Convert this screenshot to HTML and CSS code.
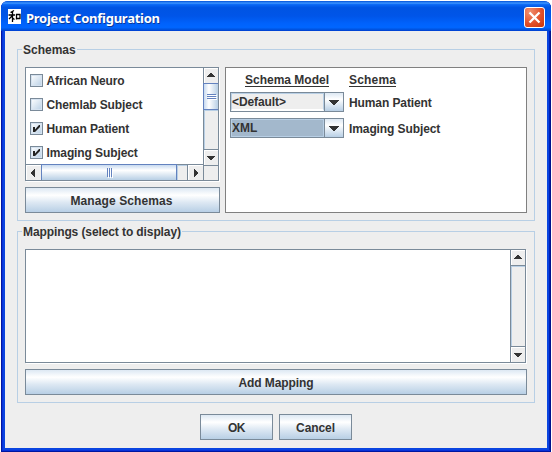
FILE: index.html
```html
<!DOCTYPE html>
<html lang="en">
<head>
<meta charset="utf-8">
<title>Project Configuration</title>
<link rel="stylesheet" href="styles.css">
</head>
<body>
<div class="window">
  <header class="titlebar">
    <svg class="app-icon" width="13" height="15" viewBox="0 0 13 15"><rect width="13" height="15" fill="#fff"/><path d="M6 1.500L2.500 3.500M0.500 6h6.500M4.500 2.500v10.500M4.500 6.500L1 10M4.500 9l2 1.500M8.500 5v5.500M8 5.500h4v4H8.500" fill="none" stroke="#000" stroke-width="1.300"/></svg>
    <h1>Project Configuration</h1>
    <button class="close" aria-label="Close"><svg width="21" height="21" viewBox="0 0 21 21"><path d="M5.500 5.500l10 10M15.500 5.500l-10 10" stroke="#fff" stroke-width="2.300" fill="none"/></svg></button>
  </header>
  <main class="client">
    <section class="group schemas">
      <h2><span>Schemas</span></h2>
      <div class="columns">
        <div class="left">
          <div class="list-pane">
            <ul class="list">
              <li><i class="check"></i><span class="tight">African Neuro</span></li>
              <li><i class="check"></i><span class="tight">Chemlab Subject</span></li>
              <li><i class="check"><svg width="13" height="13" viewBox="0 0 13 13"><path d="M3 5h2v2.500L9 3h1v2L5 10H3z" fill="#222"/></svg></i><span class="tight">Human Patient</span></li>
              <li><i class="check"><svg width="13" height="13" viewBox="0 0 13 13"><path d="M3 5h2v2.500L9 3h1v2L5 10H3z" fill="#222"/></svg></i><span class="tight">Imaging Subject</span></li>
            </ul>
            <div class="vbar">
              <div class="arrow up"><svg width="8" height="4" viewBox="0 0 8 4" shape-rendering="crispEdges"><path d="M3 0h2v1h1v1h1v1h1v1H0V3h1V2h1V1h1z"/></svg></div>
              <div class="vthumb"><i></i><i></i><i></i></div>
              <div class="vtrack"></div>
              <div class="arrow down"><svg width="8" height="4" viewBox="0 0 8 4" shape-rendering="crispEdges"><path d="M3 4h2V3h1V2h1V1h1V0H0v1h1v1h1v1h1z"/></svg></div>
            </div>
            <div class="hbar">
              <div class="harrow left-arrow"><svg width="4" height="8" viewBox="0 0 4 8" shape-rendering="crispEdges"><path d="M0 3h1V2h1V1h1V0h1v8H3V7H2V6H1V5H0z"/></svg></div>
              <div class="hthumb"><i></i><i></i><i></i></div>
              <div class="htrack"></div>
              <div class="harrow right"><svg width="4" height="8" viewBox="0 0 4 8" shape-rendering="crispEdges"><path d="M4 3H3V2H2V1H1V0H0v8h1V7h1V6h1V5h1z"/></svg></div>
            </div>
            <div class="corner"></div>
          </div>
          <button class="btn manage"><span>Manage Schemas</span></button>
        </div>
        <div class="models">
          <div class="head"><span>Schema Model</span></div>
          <div class="head second"><span>Schema</span></div>
          <div class="combo"><span class="value"><b class="tight">&lt;Default&gt;</b></span><span class="drop"><svg width="10" height="5" viewBox="0 0 10 5" shape-rendering="crispEdges"><path d="M0 0h10v1H9v1H8v1H7v1H6v1H4V4H3V3H2V2H1V1H0z"/></svg></span></div>
          <div class="name"><span class="tight">Human Patient</span></div>
          <div class="combo selected"><span class="value"><b>XML</b></span><span class="drop"><svg width="10" height="5" viewBox="0 0 10 5" shape-rendering="crispEdges"><path d="M0 0h10v1H9v1H8v1H7v1H6v1H4V4H3V3H2V2H1V1H0z"/></svg></span></div>
          <div class="name"><span class="tight">Imaging Subject</span></div>
        </div>
      </div>
    </section>
    <section class="group mappings">
      <h2><span class="tight">Mappings (select to display)</span></h2>
      <div class="map-pane">
        <div class="map-view"></div>
        <div class="vbar">
          <div class="arrow up"><svg width="8" height="4" viewBox="0 0 8 4" shape-rendering="crispEdges"><path d="M3 0h2v1h1v1h1v1h1v1H0V3h1V2h1V1h1z"/></svg></div>
          <div class="vtrack"></div>
          <div class="arrow down"><svg width="8" height="4" viewBox="0 0 8 4" shape-rendering="crispEdges"><path d="M3 4h2V3h1V2h1V1h1V0H0v1h1v1h1v1h1z"/></svg></div>
        </div>
      </div>
      <button class="btn"><span class="add">Add Mapping</span></button>
    </section>
    <footer>
      <button class="btn"><span class="ok">OK</span></button>
      <button class="btn"><span class="tight">Cancel</span></button>
    </footer>
  </main>
</div>
</body>
</html>
```

FILE: styles.css
```css
* { box-sizing: border-box; }
body {
  margin: 0;
  padding: 1px;
  width: 552px;
  height: 452px;
  overflow: hidden;
  background: #fff;
  color: #333;
  font: bold 12px/14px "Liberation Sans", Arial, sans-serif;
}
h1, h2, ul { margin: 0; padding: 0; font-size: inherit; list-style: none; }
span, b { white-space: nowrap; }
button { font: inherit; color: inherit; padding: 0; border-radius: 0; }
svg { display: block; flex: none; }
.tight { letter-spacing: -0.1px; }

.window {
  width: 550px;
  height: 451px;
  padding: 0 4px 4px;
  border-radius: 7px 7px 0 0;
  background: #0a44e0;
  box-shadow: inset 1px -1px #0016a0, inset -1px -1px #00138c, inset 2px -2px #0831d9, inset -2px -2px #0020b4;
  overflow: hidden;
}
.titlebar {
  display: flex;
  align-items: center;
  height: 30px;
  margin: 0 -4px;
  padding: 3px 6px 0 7px;
  background: linear-gradient(#0050d8 0, #3d95ff 7%, #0a68f5 12%, #0054e3 22%, #0055e8 50%, #0062fc 75%, #0066ff 88%, #0053e0 95%, #003dd0 100%);
}
.app-icon { margin-top: -3px; }
h1 {
  flex: 1;
  margin-left: 5px;
  color: #fff;
  font: bold 13px/18px "Noto Sans", sans-serif;
  letter-spacing: -0.25px;
  text-shadow: 1px 1px #0a3a9c;
}
.close {
  width: 21px;
  height: 21px;
  border: 1px solid #fff;
  border-radius: 3px;
  background: radial-gradient(circle at 25% 20%, #f09070, #e2512c 55%, #c83408);
}
.close svg { margin: -1px; }

.client {
  height: 417px;
  padding: 18px 12px 0;
  background: #eee;
}
.group {
  width: 518px;
  height: 172px;
  padding: 0 7px;
  border: 1px solid #b8cfe5;
}
h2 {
  height: 17px;
  margin-left: -3px;
}
h2 span {
  display: block;
  width: max-content;
  height: 14px;
  padding: 0 1px;
  position: relative;
  top: -7px;
  background: #eee;
}
.mappings { margin-top: 10px; }
.columns { display: flex; gap: 5px; }
.left { width: 195px; }
.list-pane {
  display: grid;
  grid-template: 97px 15px / 177px 15px;
  width: 194px;
  height: 114px;
  margin-bottom: 6px;
  border: 1px solid #7a8a99;
  box-shadow: 1px 1px #fff;
}
.list {
  overflow: hidden;
  padding: 1px 0 0 4px;
  border-bottom: 1px solid #7a8a99;
  background: #fff;
}
.list li { display: flex; align-items: center; height: 24px; gap: 3.5px; }
.check {
  width: 13px;
  height: 13px;
  margin-bottom: 2px;
  border: 1px solid #7a8a99;
  box-shadow: inset 0 0 0 1px #d5e2f0;
  background: linear-gradient(135deg, #fff, #b8cfe5);
}
.check svg { margin: -1px; }
.vbar {
  display: flex;
  flex-direction: column;
  border-left: 1px solid #7a8a99;
  background: #eee;
}
.arrow, .harrow { display: flex; align-items: center; justify-content: center; fill: #333; }
.arrow { height: 16px; border-bottom: 1px solid #7a8a99; box-shadow: inset 1px 1px #fff; }
.up { padding-bottom: 2px; }
.down { padding-top: 1px; border-top: 1px solid #7a8a99; border-bottom: 0; box-shadow: inset 1px 1px #fff; }
.vtrack { flex: 1; box-shadow: inset 1px 1px #b8cfe5; }
.vthumb {
  display: flex;
  flex-direction: column;
  align-items: center;
  justify-content: center;
  gap: 1px;
  height: 27px;
  margin-top: -1px;
  margin-left: -1px;
  border: 1px solid #6382bf;
  border-right: 0;
  background: linear-gradient(90deg, #c8daf0, #fff 35%, #b8cfe5);
}
.vthumb i { width: 9px; height: 1px; background: #6382bf; box-shadow: 1px 1px #fff; }
.hbar { display: flex; background: #eee; }
.harrow { width: 15px; box-shadow: inset 1px 1px #fff; }
.left-arrow { padding-right: 2px; }
.right { width: 16px; margin-left: auto; border-left: 1px solid #7a8a99; }
.htrack { flex: 1; box-shadow: inset 1px 1px #b8cfe5; }
.hthumb {
  display: flex;
  align-items: center;
  justify-content: center;
  gap: 1px;
  width: 136px;
  margin-top: -1px;
  border: 1px solid #6382bf;
  border-bottom: 0;
  background: linear-gradient(#c8daf0, #fff 35%, #b8cfe5);
}
.hthumb i { width: 1px; height: 9px; background: #6382bf; box-shadow: 1px 1px #fff; }
.corner { border: 1px solid #7a8a99; border-width: 1px 0 0 1px; background: #eee; }

.btn {
  display: flex;
  align-items: center;
  justify-content: center;
  height: 26px;
  border: 1px solid #7a8a99;
  background: linear-gradient(#dde8f3 0, #fff 30%, #dde8f3 60%, #b8cfe5 100%);
}
.left .btn { width: 195px; }
.manage { padding: 2px 2px 0 0; letter-spacing: 0.1px; }
.models {
  display: grid;
  grid-template-columns: 114px 1fr;
  grid-template-rows: 18px 26px 26px;
  column-gap: 5px;
  align-content: start;
  width: 302px;
  height: 146px;
  padding: 4px;
  border: 1px solid #808080;
  background: #fff;
}
.head { padding-top: 1px; text-align: center; }
.head.second { text-align: left; letter-spacing: 0.2px; }
.head span { display: inline-block; height: 14px; border-bottom: 1px solid #333; }
.combo {
  display: flex;
  height: 20px;
  margin-top: 2px;
  border: 1px solid #7a8a99;
}
.value {
  flex: 1;
  height: 18px;
  padding: 1px 0 0;
  border: 1px solid #b8cfe5;
  border-bottom: 2px solid #fff;
  background: #eee;
}
.value b { display: block; }
.selected .value { background: #a3b8cc; border: 1px solid #b8cfe5; }
.drop {
  display: flex;
  align-items: center;
  justify-content: center;
  width: 19px;
  border-left: 1px solid #7a8a99;
  background: linear-gradient(#dde8f3, #fff 35%, #b8cfe5);
  fill: #333;
}
.name { padding-top: 6px; }

.map-pane {
  display: grid;
  grid-template-columns: 1fr 15px;
  width: 501px;
  height: 114px;
  margin-bottom: 6px;
  border: 1px solid #7a8a99;
  box-shadow: 1px 1px #fff;
}
.map-view { background: #fff; }
.mappings .btn { width: 502px; padding-top: 1px; }
.add { letter-spacing: -0.1px; }
.ok { letter-spacing: -0.4px; }
footer { display: flex; gap: 6px; justify-content: center; margin-top: 11px; }
footer .btn { width: 73px; padding-top: 1px; }
```
